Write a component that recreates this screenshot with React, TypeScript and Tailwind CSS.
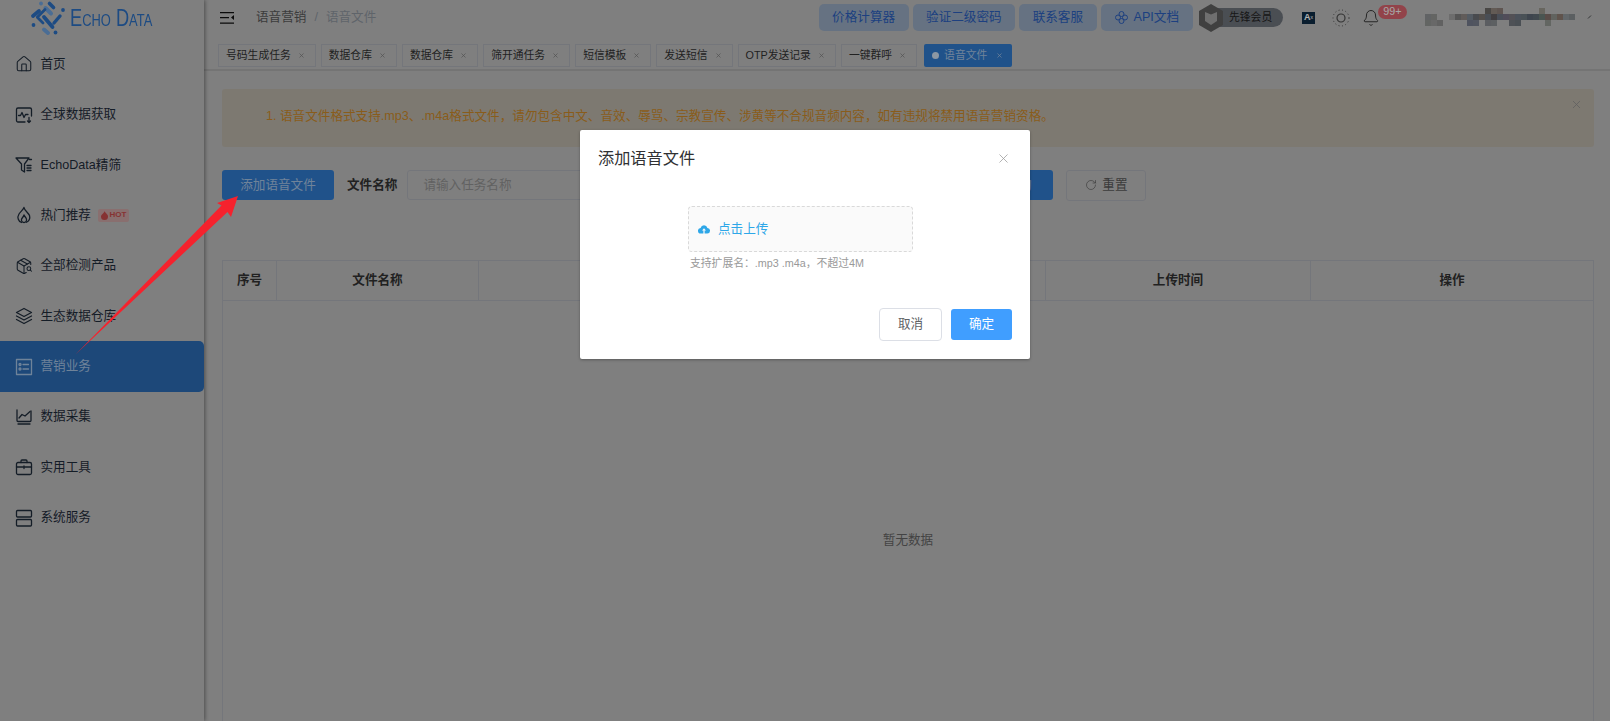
import React from "react";
import { House, PackageSearch, Bell, X, RotateCw } from "lucide-react";

const FONT = { fontFamily: '"Liberation Sans","Noto Sans CJK SC",sans-serif' };

function Ic({ children }: { children: React.ReactNode }) {
  return (
    <svg width="18" height="18" viewBox="0 0 18 18" fill="none" stroke="currentColor" strokeWidth="1.3" strokeLinecap="round" strokeLinejoin="round">
      {children}
    </svg>
  );
}

const iconClass = "w-[18px] h-[18px]";
const nav: { t: string; icon: React.ReactNode; hot?: boolean; active?: boolean }[] = [
  { t: "首页", icon: <House className={iconClass} strokeWidth={1.4} /> },
  {
    t: "全球数据获取",
    icon: (
      <Ic>
        <path d="M10 16H3a1.500 1.500 0 0 1-1.500-1.500v-11A1.500 1.500 0 0 1 3 2h12a1.500 1.500 0 0 1 1.500 1.500V10" />
        <path d="M3.500 9.500h2l1.500-3 2 5 1.500-3h2.500" />
        <path d="M14 11.500v5M12.500 15l1.500 1.500 1.500-1.500" />
      </Ic>
    ),
  },
  {
    t: "EchoData精筛",
    icon: (
      <Ic>
        <path d="M1 2h13L9.500 8v8l-3-2V8z" />
        <path d="M12 9.500h4M12 12h4M12 14.500h4M14.500 3.500h2" />
      </Ic>
    ),
  },
  {
    t: "热门推荐",
    hot: true,
    icon: (
      <Ic>
        <path d="M9 1.500c.5 3 4 5 5.500 8a6 6 0 0 1-3 6.800M9 1.500C8 4 5.500 5.500 4 8 1.800 11.500 3.500 15.500 6.500 16.500" />
        <path d="M9 9c.3 1.500 2.500 2.500 2.500 4.500A2.500 2.500 0 0 1 9 16.500a2.500 2.500 0 0 1-2.500-3C6.700 12 8.500 11 9 9z" />
      </Ic>
    ),
  },
  { t: "全部检测产品", icon: <PackageSearch className={iconClass} strokeWidth={1.4} /> },
  {
    t: "生态数据仓库",
    icon: (
      <Ic>
        <path d="M9 1.500l7.500 4L9 9.500l-7.500-4z" />
        <path d="M1.500 9L9 13l7.500-4M1.500 12.500L9 16.500l7.500-4" />
      </Ic>
    ),
  },
  {
    t: "营销业务",
    active: true,
    icon: (
      <Ic>
        <rect x="1.500" y="1.500" width="15" height="15" />
        <circle cx="5" cy="6.500" r="1" />
        <circle cx="5" cy="11" r="1" />
        <path d="M8 6.500h5.500M8 11h5.500" />
      </Ic>
    ),
  },
  {
    t: "数据采集",
    icon: (
      <Ic>
        <path d="M2 2v10.500a1 1 0 0 0 1 1h12a1 1 0 0 0 1-1V3" />
        <path d="M4 10l3-3.500 3 1.500 5-4.500M3 16h12" />
      </Ic>
    ),
  },
  {
    t: "实用工具",
    icon: (
      <Ic>
        <rect x="1.500" y="4.500" width="15" height="12" rx="1.500" />
        <path d="M6 4.500V3a1 1 0 0 1 1-1h4a1 1 0 0 1 1 1v1.500M1.500 9h15M9 8v2.500" />
      </Ic>
    ),
  },
  {
    t: "系统服务",
    icon: (
      <Ic>
        <rect x="1.500" y="1.500" width="15" height="6.500" rx="1" />
        <rect x="1.500" y="10.500" width="15" height="6.500" rx="1" />
      </Ic>
    ),
  },
];

const tabs = ["号码生成任务", "数据仓库", "数据仓库", "筛开通任务", "短信模板", "发送短信", "OTP发送记录", "一键群呼"];

function Logo() {
  const dark = "#2a6cbc";
  const light = "#6a9cd6";
  const lines: [number, number, number, number, string, number][] = [
    [49.500, 3.500, 53.500, 7.500, dark, 3.600],
    [45.500, 8, 51, 13.500, light, 4],
    [33, 16, 39, 11, dark, 3.800],
    [37.500, 17, 45, 9.500, dark, 2.800],
    [37.500, 17.500, 43, 23, dark, 2.800],
    [44, 17, 52.500, 27, dark, 3.800],
    [54, 23, 60, 16, dark, 3.400],
    [44, 29.500, 48, 33, light, 4],
  ];
  const dots: [number, number, string][] = [
    [41, 3.500, light],
    [63, 10, dark],
    [33.500, 25, dark],
    [55.500, 32.500, dark],
  ];
  return (
    <svg width="36" height="36" viewBox="30 0 36 36" className="shrink-0">
      {lines.map((l, i) => (
        <line key={i} x1={l[0]} y1={l[1]} x2={l[2]} y2={l[3]} stroke={l[4]} strokeWidth={l[5]} strokeLinecap="round" />
      ))}
      {dots.map((d, i) => (
        <circle key={i} cx={d[0]} cy={d[1]} r="1.900" fill={d[2]} />
      ))}
    </svg>
  );
}

function Mosaic() {
  const mid = ["#a9aaa8", "#a9aaa8", "#b7b7b7", "#8f8f8f", "#a49c98", "#8e9aa8", "#7c7f85", "#8c8680", "#7c8490", "#6f6a6c", "#7e8694", "#8a8296", "#8c8a92", "#7f8a98", "#7c8a92", "#6a7684", "#6e7c86", "#7e9088", "#96807a", "#a4a8a0", "#a08c80", "#a6aeb4", "#9aa0a4"];
  const blocks: [number, number, string][] = [
    [0, 0, "#a4a8aa"],
    [60, -1, "#7c7874"], [66, -1, "#a89a90"], [72, -1, "#a09088"], [114, -1, "#b0aca0"],
    [0, 1, "#a8aaa8"], [6, 1, "#b0b0b0"], [12, 1, "#a4a4a4"],
    [42, 1, "#868da0"], [48, 1, "#8a90a0"], [60, 1, "#9a9ea4"], [66, 1, "#9ea2a6"], [84, 1, "#848a92"], [90, 1, "#7e868e"], [120, 1, "#a8aca6"],
  ];
  return (
    <svg width="170" height="20" viewBox="0 -6 170 20" className="shrink-0 brightness-[0.85]">
      {mid.map((c, i) => (
        <rect key={i} x={i < 2 ? i * 6 : 24 + (i - 2) * 6} y="0" width="6" height="6" fill={c} />
      ))}
      {blocks.map((b, i) => (
        <rect key={i} x={b[0]} y={b[1] * 6} width="6" height="6" fill={b[2]} />
      ))}
      <path d="M163 4.500l3-3" stroke="#55585c" strokeWidth="1" />
    </svg>
  );
}

export default function App() {
  return (
    <div style={FONT} className="relative flex h-[721px] w-[1610px] overflow-hidden bg-[#b7b7b7] text-[12.6px] text-[#1e2a38]">
      <aside className="z-10 flex h-full w-[204px] shrink-0 flex-col bg-[#b7b7b7] shadow-[1px_0_4px_rgba(0,0,0,0.4)]">
        <div className="flex h-[39px] items-center pl-[30px] pb-[3px]">
          <Logo />
          <span className="ml-[4px] origin-left scale-x-[0.76] whitespace-nowrap text-[24px] leading-none text-[#2a6cbc] [font-variant-caps:small-caps]">
            Echo Data
          </span>
        </div>
        <nav className="flex flex-col">
          {nav.map((n) => (
            <div
              key={n.t}
              className={`flex h-[50.4px] items-center gap-[7.500px] rounded-r-[5px] pl-[15px] ${n.active ? "bg-[#2a68ae] text-[#a0bcdc]" : ""}`}
            >
              {n.icon}
              <span>{n.t}</span>
              {n.hot && (
                <span className="flex h-[13px] w-[31px] items-center justify-center gap-[1px] rounded-[2px] bg-[#c4a0a0] text-[8px] font-bold leading-none text-[#c04848]">
                  <svg width="7" height="9" viewBox="0 0 7 9" className="shrink-0">
                    <path d="M3.500 0c.3 1.800 3.500 3 3.500 5.500A3.500 3.500 0 0 1 0 5.500C0 3.500 3 2.500 3.500 0z" fill="currentColor" />
                  </svg>
                  HOT
                </span>
              )}
            </div>
          ))}
        </nav>
      </aside>

      <main className="flex min-w-0 flex-1 flex-col">
        <header className="flex h-[35px] shrink-0 items-center pl-[16px] pr-[13px]">
          <svg width="14" height="14" viewBox="0 0 14 14" className="shrink-0">
            <path d="M0 1h14v1.300H0zM0 6h9v1.300H0zM0 11.500h14v1.300H0zM14 4v5l-3-2.500z" fill="#111" />
          </svg>
          <span className="ml-[22px] text-[#555]">语音营销</span>
          <span className="mx-[8px] text-[#899099]">/</span>
          <span className="text-[#899099]">语音文件</span>

          <div className="ml-auto flex items-center">
            <div className="flex gap-[4px] text-[#2a5cb8]">
              {["价格计算器", "验证二级密码", "联系客服"].map((t) => (
                <span key={t} className="flex h-[27px] items-center rounded-[5px] bg-[#93a4ba] px-[13.500px]">
                  {t}
                </span>
              ))}
              <span className="flex h-[27px] items-center gap-[6px] rounded-[5px] bg-[#93a4ba] px-[14px]">
                <svg width="13" height="13" viewBox="0 0 13 13" fill="none" stroke="currentColor" strokeWidth="1" className="shrink-0">
                  <circle cx="6.500" cy="3" r="2.500" />
                  <circle cx="10" cy="6.500" r="2.500" />
                  <circle cx="6.500" cy="10" r="2.500" />
                  <circle cx="3" cy="6.500" r="2.500" />
                </svg>
                API文档
              </span>
            </div>

            <div className="relative ml-[6px] flex h-[28px] w-[84px] items-center">
              <div className="ml-[15px] flex h-[19px] w-[69px] items-center rounded-r-full bg-[#6b7078] pl-[15px] text-[10.800px] text-[#222]">先锋会员</div>
              <svg width="24" height="28" viewBox="0 0 24 28" className="absolute left-0 top-0">
                <path d="M12 0l12 7v14l-12 7L0 21V7z" fill="#5c5c5c" />
                <path d="M6 8l6 2.500L18 8v9l-6 4-6-4z" fill="#a0a0a0" />
              </svg>
            </div>

            <span className="relative ml-[19px] flex h-[12px] w-[13px] items-center justify-center bg-[#0f2c44] text-[9px] font-bold leading-none text-white">
              A<span className="text-[5px] font-normal leading-none">x</span>
            </span>

            <svg width="18" height="18" viewBox="0 0 18 18" fill="none" stroke="#4a4a4a" className="ml-[17px] shrink-0">
              <circle cx="9" cy="9" r="4" strokeWidth="1.200" />
              <circle cx="9" cy="9" r="8" strokeWidth="1" strokeDasharray="1 2.500" />
            </svg>

            <div className="relative ml-[12px] h-[18px] w-[15px]">
              <Bell className="h-[18px] w-[18px] text-[#333]" strokeWidth={1.300} />
              <span className="absolute -top-[4px] left-[16px] flex h-[14px] w-[29px] items-center justify-center rounded-full bg-[#d1616a] text-[10.800px] leading-none text-[#eee]">99+</span>
            </div>

            <div className="ml-[48px] mr-[2px]">
              <Mosaic />
            </div>
          </div>
        </header>

        <div className="flex h-[36px] shrink-0 items-start gap-[5px] border-b-2 border-[#a6a6a6] pl-[14px] pt-[9px] text-[10.800px] text-[#303030]">
          {tabs.map((t, i) => (
            <span key={i} className="flex h-[23px] items-center border border-[#a7aab1] pl-[7px] pr-[10px]">
              {t}
              <X className="ml-[7px] h-[7px] w-[7px] text-[#777]" strokeWidth={2.500} />
            </span>
          ))}
          <span className="ml-[2px] flex h-[23px] items-center rounded-[2px] bg-[#2f76c6] pl-[8px] pr-[9px] text-[#a0bcdc]">
            <span className="mr-[5px] h-[7px] w-[7px] rounded-full bg-[#c9d8ea]" />
            语音文件
            <X className="ml-[9px] h-[7px] w-[7px]" strokeWidth={2.500} />
          </span>
        </div>

        <div className="flex min-h-0 flex-1 flex-col pl-[18px] pr-[16px] pt-[18px]">
          <div className="relative flex h-[58px] shrink-0 items-center rounded-[3px] bg-[#b4aea3] pb-[4px] pl-[44px] text-[#c58528]">
            1. 语音文件格式支持.mp3、.m4a格式文件，请勿包含中文、音效、辱骂、宗教宣传、涉黄等不合规音频内容，如有违规将禁用语音营销资格。
            <X className="absolute right-[11px] top-[9px] h-[13px] w-[13px] text-[#8a8a8a]" strokeWidth={1.500} />
          </div>

          <div className="mt-[23px] flex h-[30px] shrink-0 items-center">
            <span className="flex h-[30px] w-[112px] items-center justify-center rounded-[3px] bg-[#2f76c6] text-[#a0bcdc]">添加语音文件</span>
            <span className="ml-[13px] font-bold text-[#303030]">文件名称</span>
            <span className="ml-[10px] flex h-[30px] w-[560px] items-center rounded-[3px] border border-[#a7aab1] pl-[15px] text-[#8c8c8c]">请输入任务名称</span>
            <span className="ml-[17px] flex h-[30px] w-[69px] items-center justify-center rounded-[3px] bg-[#2f76c6] text-[#a0bcdc]">查询</span>
            <span className="ml-[13px] flex h-[31px] w-[80px] items-center justify-center gap-[5px] rounded-[3px] border border-[#a7aab1] text-[#555]">
              <RotateCw className="h-[12px] w-[12px]" strokeWidth={1.300} />
              重置
            </span>
          </div>

          <div className="mt-[60px] flex h-[520px] shrink-0 flex-col border border-[#a7aab1]">
            <div className="grid h-[40px] shrink-0 grid-cols-[54px_202px_567px_265px_1fr] items-center border-b border-[#a7aab1] text-center font-bold text-[#303030]">
              <span className="flex h-full items-center justify-center border-r border-[#a7aab1]">序号</span>
              <span className="flex h-full items-center justify-center border-r border-[#a7aab1]">文件名称</span>
              <span className="flex h-full items-center justify-center border-r border-[#a7aab1]">文件路径</span>
              <span className="flex h-full items-center justify-center border-r border-[#a7aab1]">上传时间</span>
              <span>操作</span>
            </div>
            <div className="flex flex-1 items-center justify-center text-[#616161]">暂无数据</div>
          </div>
        </div>
      </main>

      <div className="absolute inset-0 z-20 bg-black/30" />

      <svg className="pointer-events-none absolute inset-0 z-30" width="1610" height="721">
        <polygon points="76,354 221.500,205.500 217,203 238,196 231,217 227.500,212" fill="#f5222d" />
      </svg>

      <div className="absolute left-[580px] top-[130px] z-40 flex h-[229px] w-[450px] flex-col rounded-[2px] bg-white shadow-[0_1px_3px_rgba(0,0,0,0.3)]">
        <div className="flex h-[56px] shrink-0 items-center justify-between pl-[18px] pr-[19px]">
          <span className="text-[16.200px] text-[#303133]">添加语音文件</span>
          <X className="h-[15px] w-[15px] text-[#999]" strokeWidth={1.200} />
        </div>
        <div className="ml-[108px] mt-[20px] flex h-[46px] w-[225px] items-center rounded-[4px] border border-dashed border-[#d9d9d9] bg-[#fafafa] pl-[9px] text-[#2ea7e8]">
          <svg width="12" height="10" viewBox="0 0 12 10" className="shrink-0">
            <path d="M3 9.500a2.800 2.800 0 0 1-.4-5.600 3.500 3.500 0 0 1 6.800 0A2.800 2.800 0 0 1 9 9.500H6.600V6.500H8L6 4.300 4 6.500h1.400v3z" fill="currentColor" />
          </svg>
          <span className="ml-[8px]">点击上传</span>
        </div>
        <div className="ml-[110px] mt-[3px] text-[10.800px] leading-[16px] text-[#999]">支持扩展名：.mp3 .m4a，不超过4M</div>
        <div className="mt-auto flex items-center justify-end gap-[9px] pb-[18px] pr-[18px]">
          <span className="flex h-[33px] w-[63px] items-center justify-center rounded-[4px] border border-[#dcdfe6] pb-[1px] text-[#606266]">取消</span>
          <span className="flex h-[31px] w-[61px] items-center justify-center rounded-[3px] bg-[#409eff] pb-[1px] text-white">确定</span>
        </div>
      </div>
    </div>
  );
}
